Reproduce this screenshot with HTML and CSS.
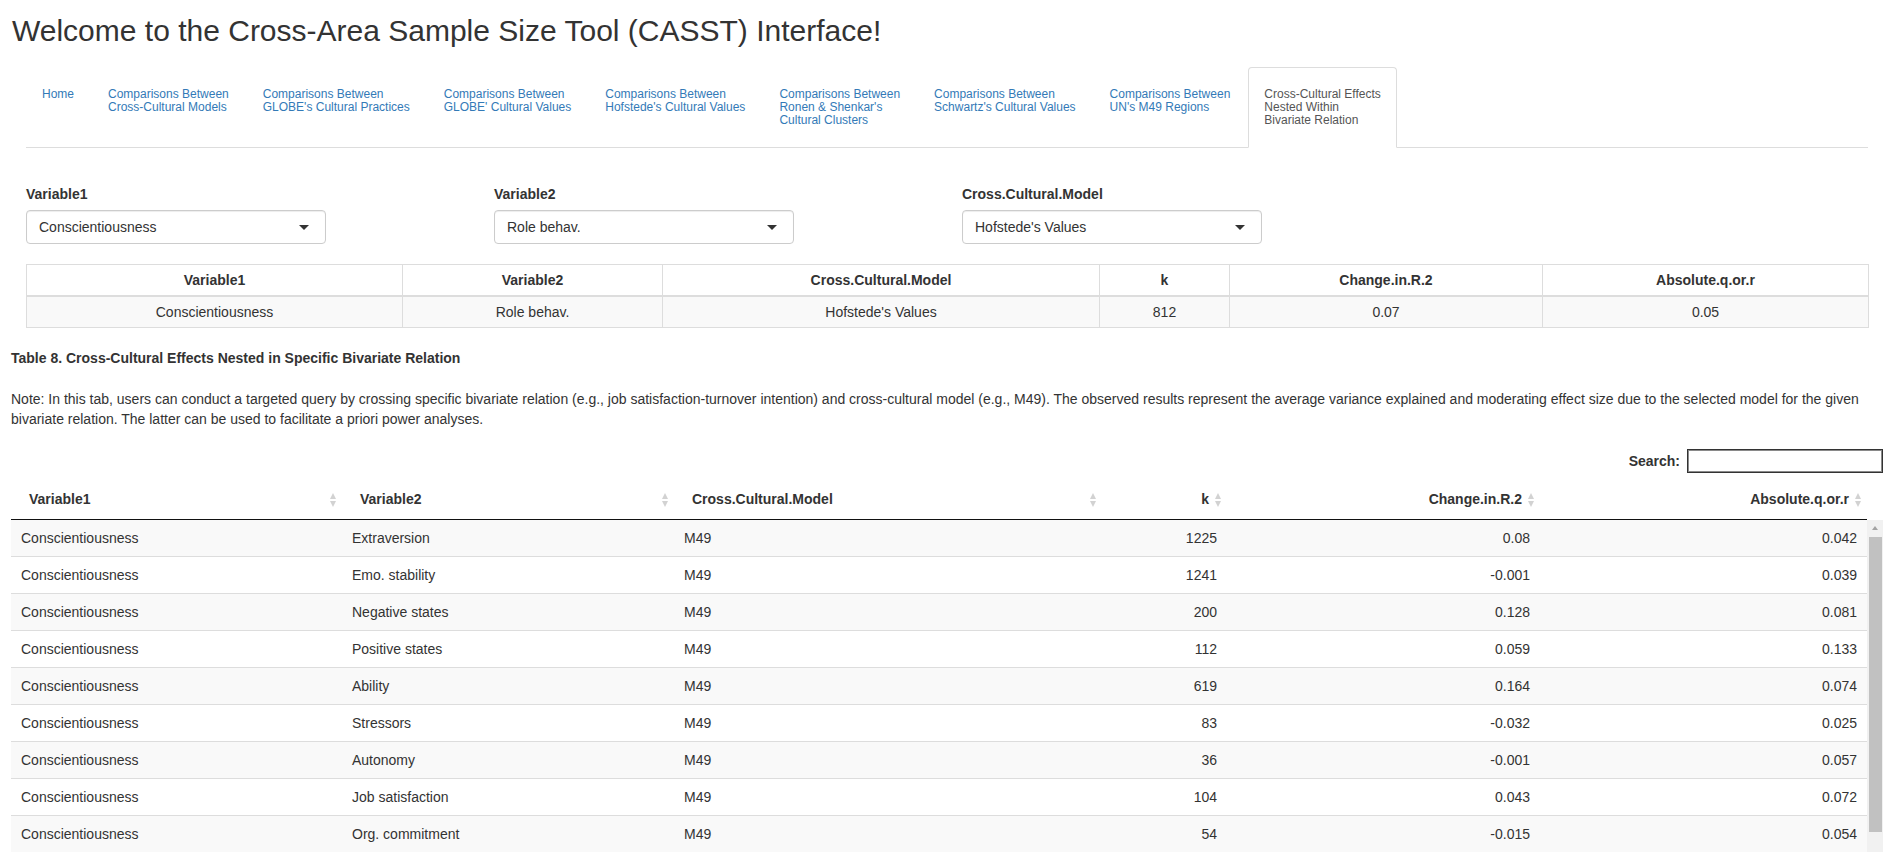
FILE: index.html
```html
<!DOCTYPE html>
<html>
<head>
<meta charset="utf-8">
<title>CASST</title>
<link rel="stylesheet" href="styles.css">
</head>
<body>
<div class="page">
  <h2 class="title">Welcome to the Cross-Area Sample Size Tool (CASST) Interface!</h2>
  <div class="tabset">
    <ul class="nav-tabs">
      <li><a>Home</a></li>
      <li><a>Comparisons Between<br>Cross-Cultural Models</a></li>
      <li><a>Comparisons Between<br>GLOBE's Cultural Practices</a></li>
      <li><a>Comparisons Between<br>GLOBE' Cultural Values</a></li>
      <li><a>Comparisons Between<br>Hofstede's Cultural Values</a></li>
      <li><a>Comparisons Between<br>Ronen &amp; Shenkar's<br>Cultural Clusters</a></li>
      <li><a>Comparisons Between<br>Schwartz's Cultural Values</a></li>
      <li><a>Comparisons Between<br>UN's M49 Regions</a></li>
      <li class="active"><a>Cross-Cultural Effects<br>Nested Within<br>Bivariate Relation</a></li>
    </ul>
    <div class="tab-content">
      <div class="inputs-row">
        <div class="input-col">
          <label class="input-label">Variable1</label>
          <div class="select"><span>Conscientiousness</span><span class="caret"></span></div>
        </div>
        <div class="input-col">
          <label class="input-label">Variable2</label>
          <div class="select"><span>Role behav.</span><span class="caret"></span></div>
        </div>
        <div class="input-col">
          <label class="input-label">Cross.Cultural.Model</label>
          <div class="select"><span>Hofstede's Values</span><span class="caret"></span></div>
        </div>
      </div>
      <table class="summary">
        <colgroup>
          <col class="s1"><col class="s2"><col class="s3"><col class="s4"><col class="s5"><col class="s6">
        </colgroup>
        <thead>
          <tr><th>Variable1</th><th>Variable2</th><th>Cross.Cultural.Model</th><th>k</th><th>Change.in.R.2</th><th>Absolute.q.or.r</th></tr>
        </thead>
        <tbody>
          <tr><td>Conscientiousness</td><td>Role behav.</td><td>Hofstede's Values</td><td>812</td><td>0.07</td><td>0.05</td></tr>
        </tbody>
      </table>
    </div>
  </div>

  <div class="caption">Table 8. Cross-Cultural Effects Nested in Specific Bivariate Relation</div>
  <p class="note">Note: In this tab, users can conduct a targeted query by crossing specific bivariate relation (e.g., job satisfaction-turnover intention) and cross-cultural model (e.g., M49). The observed results represent the average variance explained and moderating effect size due to the selected model for the given bivariate relation. The latter can be used to facilitate a priori power analyses.</p>

  <div class="dt">
    <div class="dt-filter"><label>Search:</label><input type="search"></div>
    <div class="dt-head">
      <table class="dt-table">
        <colgroup>
          <col class="d1"><col class="d2"><col class="d3"><col class="d4"><col class="d5"><col class="d6">
        </colgroup>
        <thead>
          <tr>
            <th class="sort">Variable1</th>
            <th class="sort">Variable2</th>
            <th class="sort">Cross.Cultural.Model</th>
            <th class="sort num">k</th>
            <th class="sort num">Change.in.R.2</th>
            <th class="sort num">Absolute.q.or.r</th>
          </tr>
        </thead>
      </table>
    </div>
    <div class="dt-body">
      <table class="dt-table">
        <colgroup>
          <col class="d1"><col class="d2"><col class="d3"><col class="d4"><col class="d5"><col class="d6">
        </colgroup>
        <tbody>
          <tr><td>Conscientiousness</td><td>Extraversion</td><td>M49</td><td class="num">1225</td><td class="num">0.08</td><td class="num">0.042</td></tr>
          <tr><td>Conscientiousness</td><td>Emo. stability</td><td>M49</td><td class="num">1241</td><td class="num">-0.001</td><td class="num">0.039</td></tr>
          <tr><td>Conscientiousness</td><td>Negative states</td><td>M49</td><td class="num">200</td><td class="num">0.128</td><td class="num">0.081</td></tr>
          <tr><td>Conscientiousness</td><td>Positive states</td><td>M49</td><td class="num">112</td><td class="num">0.059</td><td class="num">0.133</td></tr>
          <tr><td>Conscientiousness</td><td>Ability</td><td>M49</td><td class="num">619</td><td class="num">0.164</td><td class="num">0.074</td></tr>
          <tr><td>Conscientiousness</td><td>Stressors</td><td>M49</td><td class="num">83</td><td class="num">-0.032</td><td class="num">0.025</td></tr>
          <tr><td>Conscientiousness</td><td>Autonomy</td><td>M49</td><td class="num">36</td><td class="num">-0.001</td><td class="num">0.057</td></tr>
          <tr><td>Conscientiousness</td><td>Job satisfaction</td><td>M49</td><td class="num">104</td><td class="num">0.043</td><td class="num">0.072</td></tr>
          <tr><td>Conscientiousness</td><td>Org. commitment</td><td>M49</td><td class="num">54</td><td class="num">-0.015</td><td class="num">0.054</td></tr>
        </tbody>
      </table>
      <div class="vscroll"><span class="vs-up"></span><span class="vs-thumb"></span></div>
    </div>
  </div>
</div>
</body>
</html>
```

FILE: styles.css
```css
html, body {
  margin: 0;
  padding: 0;
  overflow: hidden;
  background: #fff;
}

body {
  width: 1889px;
  font-family: "Liberation Sans", Arial, Helvetica, sans-serif;
  font-size: 14px;
  line-height: 20px;
  color: #333;
}

.page {
  padding: 0 6px 0 11px;
}

.title {
  margin: 14px 0 20px 1px;
  font-size: 30px;
  line-height: 33px;
  font-weight: normal;
  color: #333;
}

/* ---------- tabs ---------- */
.tabset {
  padding: 0 15px;
}

.nav-tabs {
  display: flex;
  align-items: flex-start;
  list-style: none;
  margin: 0;
  padding: 0;
  border-bottom: 1px solid #ddd;
}

.nav-tabs li {
  margin: 0 2px -1px 0;
}

.nav-tabs a {
  display: block;
  padding: 20px 15px;
  border: 1px solid transparent;
  border-radius: 4px 4px 0 0;
  font-size: 12px;
  line-height: 13px;
  color: #337ab7;
  text-decoration: none;
  white-space: nowrap;
}

.nav-tabs li.active a {
  color: #555;
  background: #fff;
  border-color: #ddd #ddd transparent;
}

.tab-content {
  padding-top: 36px;
}

/* ---------- inputs ---------- */
.inputs-row {
  display: grid;
  grid-template-columns: repeat(4, 468px);
  margin: 0 -15px;
}

.input-col {
  padding: 0 15px;
}

.input-label {
  display: block;
  font-weight: bold;
  margin-bottom: 6px;
}

.select {
  box-sizing: border-box;
  width: 300px;
  height: 34px;
  padding: 6px 12px;
  border: 1px solid #ccc;
  border-radius: 4px;
  box-shadow: inset 0 1px 1px rgba(0, 0, 0, 0.075);
  display: flex;
  align-items: center;
  justify-content: space-between;
  color: #333;
}

.caret {
  width: 0;
  height: 0;
  border-left: 5px solid transparent;
  border-right: 5px solid transparent;
  border-top: 5px solid #333;
  margin-right: 4px;
}

/* ---------- summary table ---------- */
.summary {
  margin-top: 20px;
  width: 1842px;
  border-collapse: collapse;
  table-layout: fixed;
}

.summary .s1 { width: 376px; }
.summary .s2 { width: 260px; }
.summary .s3 { width: 437px; }
.summary .s4 { width: 130px; }
.summary .s5 { width: 313px; }
.summary .s6 { width: 326px; }

.summary th,
.summary td {
  border: 1px solid #ddd;
  padding: 5px;
  line-height: 20px;
  text-align: center;
}

.summary th {
  border-bottom-width: 2px;
  font-weight: bold;
}

.summary tbody tr {
  background: #f9f9f9;
}

/* ---------- caption & note ---------- */
.caption {
  margin-top: 20px;
  font-weight: bold;
}

.note {
  margin: 21px 0 0;
}

/* ---------- datatable ---------- */
.dt {
  margin-top: 20px;
}

.dt-filter {
  display: flex;
  justify-content: flex-end;
  align-items: center;
  height: 24px;
}

.dt-filter label {
  font-weight: bold;
}

.dt-filter input {
  box-sizing: border-box;
  width: 196px;
  height: 24px;
  margin: 0 0 0 7px;
  padding: 3px;
  border: 1px solid #333;
  box-shadow: inset 0 0 0 1px #8a8a8a;
  background: #fff;
  font: inherit;
  outline: none;
}

.dt-head {
  margin-top: 6px;
}

.dt-table {
  width: 1856px;
  flex: none;
  table-layout: fixed;
  border-collapse: separate;
  border-spacing: 0;
}

.dt-table .d1 { width: 331px; }
.dt-table .d2 { width: 332px; }
.dt-table .d3 { width: 428px; }
.dt-table .d4 { width: 125px; }
.dt-table .d5 { width: 313px; }
.dt-table .d6 { width: 327px; }

.dt-head th {
  position: relative;
  padding: 10px 18px;
  border-bottom: 1px solid #111;
  text-align: left;
  font-weight: bold;
  line-height: 20px;
  white-space: nowrap;
}

.dt-head th.num {
  text-align: right;
}

.dt-head th.sort::before,
.dt-head th.sort::after {
  content: "";
  position: absolute;
  right: 6px;
  width: 0;
  height: 0;
  border-left: 3.5px solid transparent;
  border-right: 3.5px solid transparent;
}

.dt-head th.sort::before {
  top: 14px;
  border-bottom: 6px solid #d2d2d2;
}

.dt-head th.sort::after {
  top: 22px;
  border-top: 6px solid #d2d2d2;
}

.dt-body {
  display: flex;
  align-items: flex-start;
  height: 340px;
  overflow: hidden;
}

.dt-body td {
  padding: 8px 10px;
  border-top: 1px solid #ddd;
  line-height: 20px;
  white-space: nowrap;
}

.dt-body tr:first-child td {
  border-top: none;
}

.dt-body tr:nth-child(odd) {
  background: #f9f9f9;
}

.dt-body td.num {
  text-align: right;
}

.vscroll {
  width: 16px;
  height: 340px;
  flex: none;
  background: #f1f1f1;
  display: flex;
  flex-direction: column;
  align-items: center;
}

.vs-up {
  width: 0;
  height: 0;
  margin-top: 6px;
  border-left: 3.5px solid transparent;
  border-right: 3.5px solid transparent;
  border-bottom: 4px solid #a3a3a3;
}

.vs-thumb {
  align-self: stretch;
  height: 295px;
  margin: 7px 1px 0 2px;
  background: #c1c1c1;
}
```
